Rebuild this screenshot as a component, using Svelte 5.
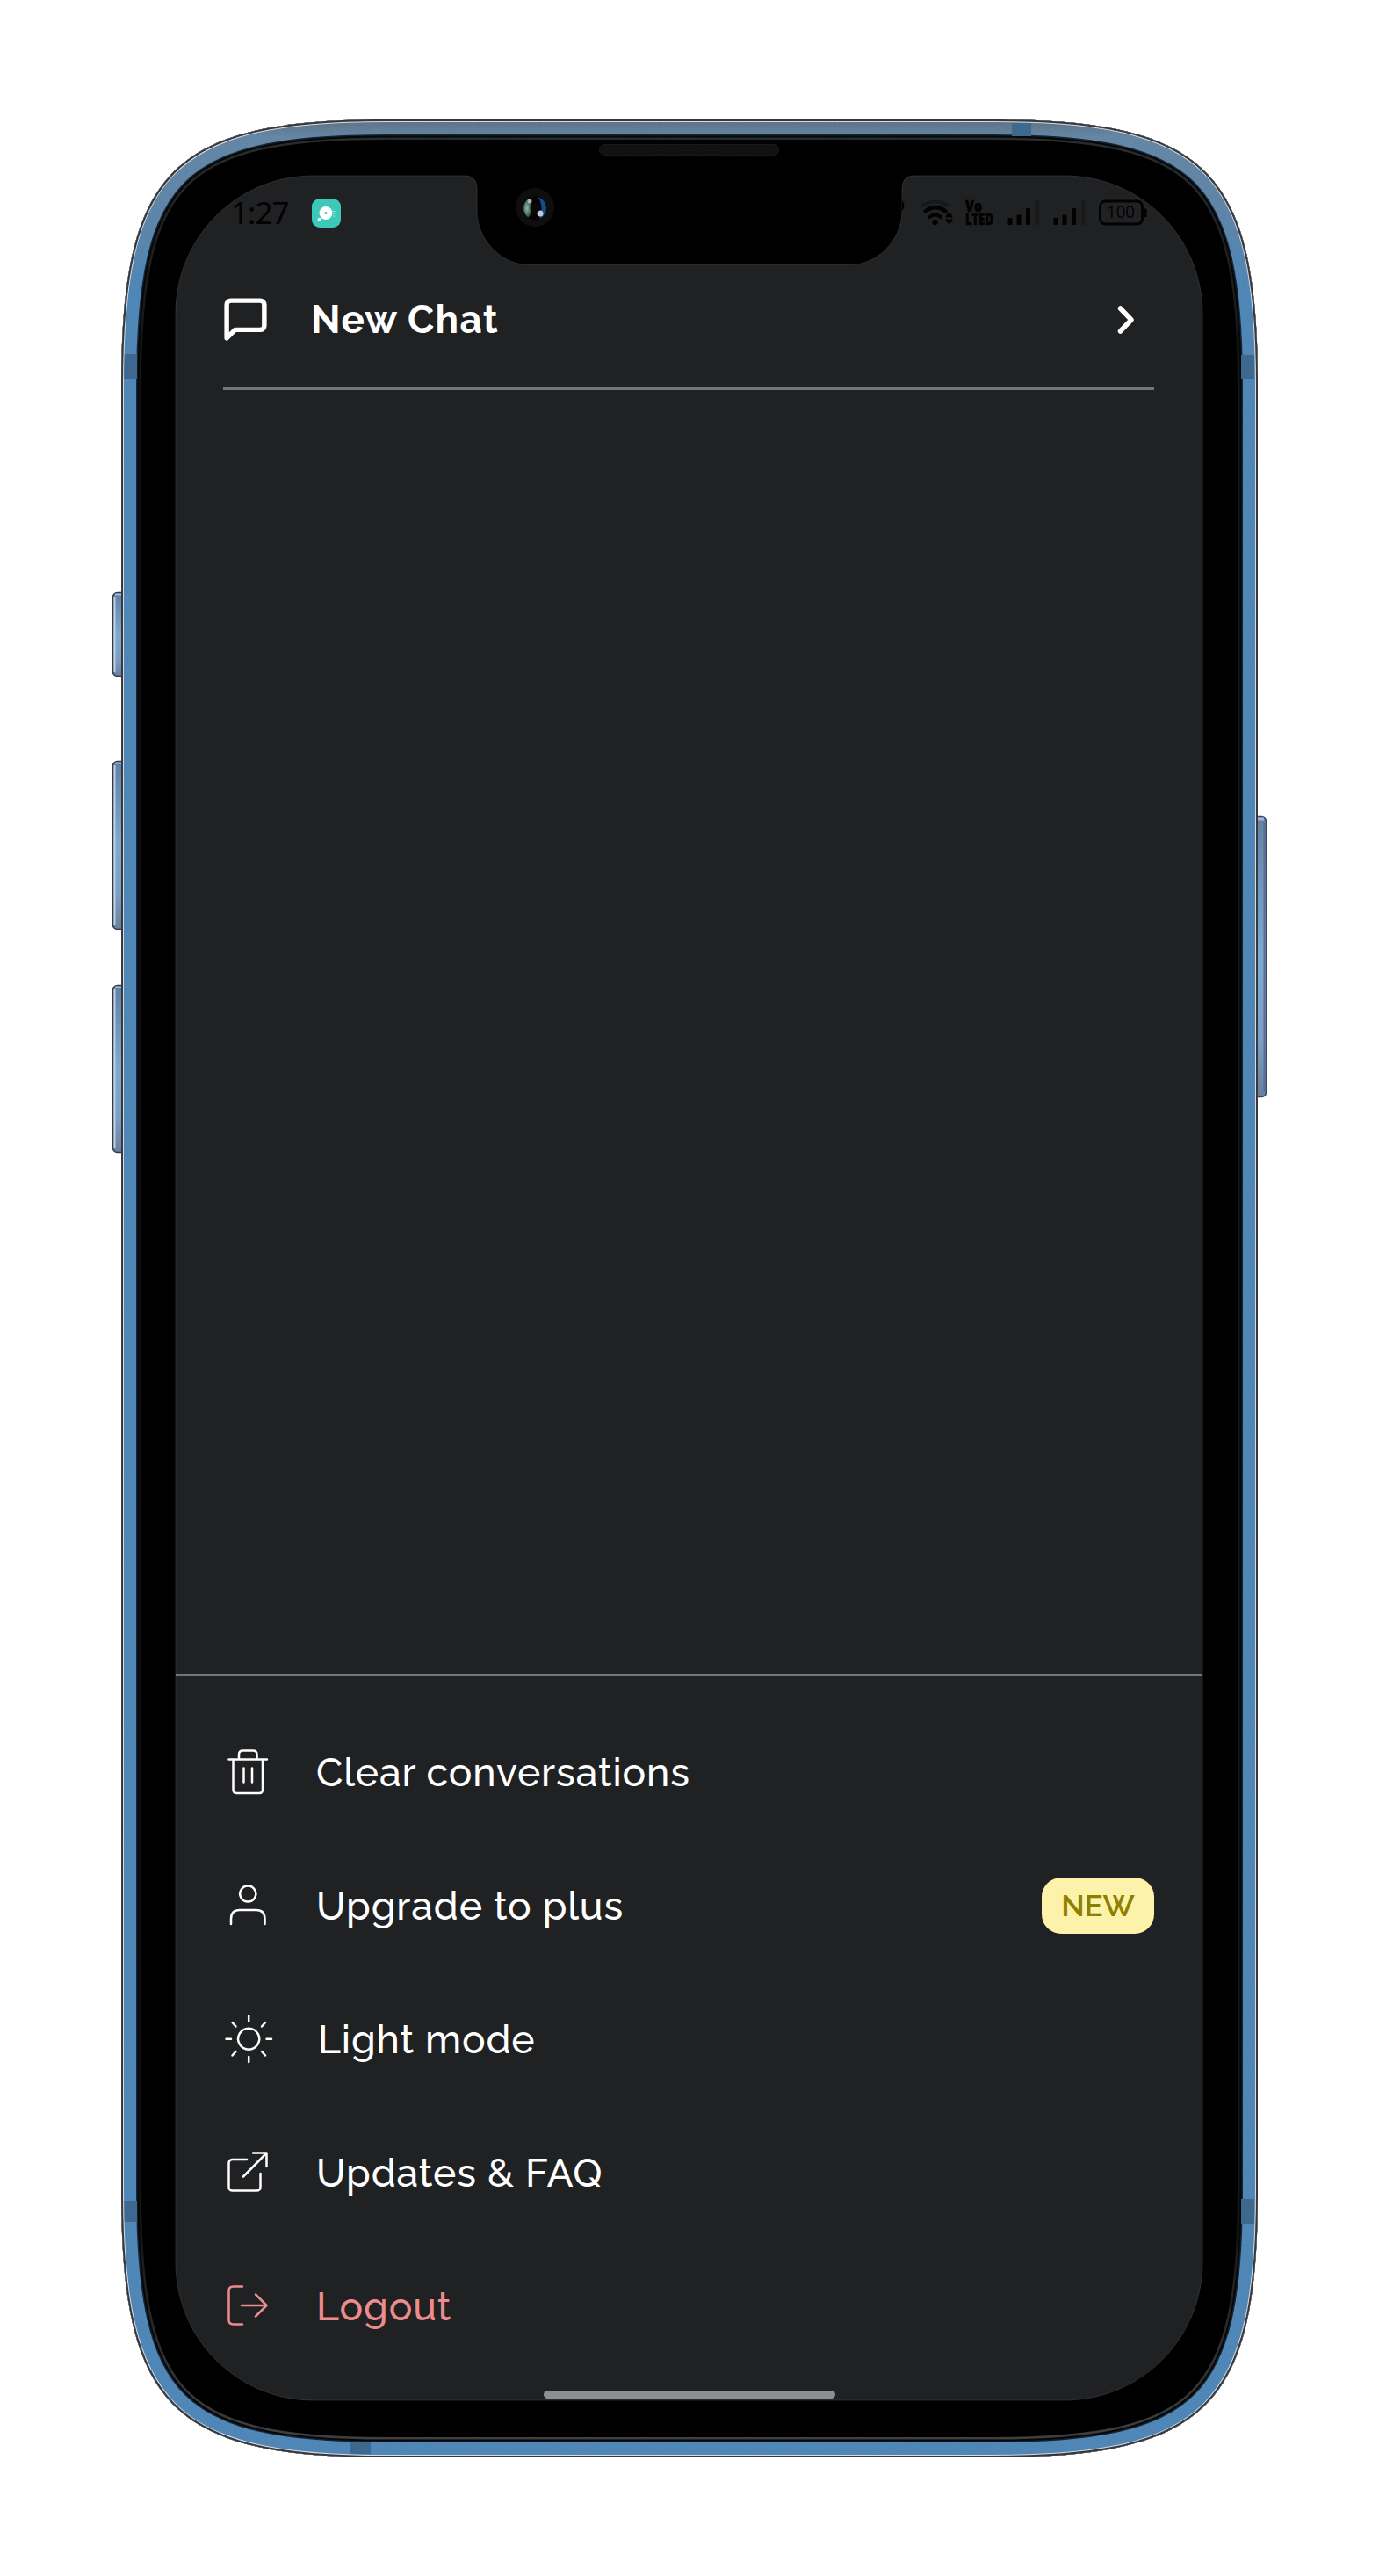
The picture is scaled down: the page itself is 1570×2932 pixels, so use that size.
<script>
  const body =
    'M440 136H1130C1374 136 1432 194 1432 440V2493C1432 2739 1374 2797 1130 2797H440C196 2797 138 2739 138 2493V440C138 194 196 136 440 136Z';

  const screen =
    'M357 200H529Q543 200 543 215V240C543 274 572 301.500 602 301.500H968C998 301.500 1027 274 1027 240V215Q1027 200 1041 200H1212C1299 200 1369 270 1369 357V2575C1369 2662 1299 2732 1212 2732H357C270 2732 200 2662 200 2575V357C200 270 270 200 357 200Z';

  const rings = [
    { color: 'url(#bezel)', width: 46 },
    { color: '#050708', width: 41 },
    { color: '#142331', width: 37 },
  ];

  const bands = [
    { x: 141, y: 403, w: 15, h: 28 },
    { x: 1413, y: 404, w: 15, h: 27 },
    { x: 1152, y: 140, w: 22, h: 15 },
    { x: 398, y: 2779, w: 24, h: 14 },
    { x: 141, y: 2505, w: 15, h: 24 },
    { x: 1413, y: 2503, w: 15, h: 28 },
  ];

  const leftKeys = [
    { y: 674, h: 96 },
    { y: 866, h: 192 },
    { y: 1121, h: 191 },
  ];

  const menu = [
    { id: 'clear', label: 'Clear conversations' },
    { id: 'plus', label: 'Upgrade to plus', badge: 'NEW' },
    { id: 'light', label: 'Light mode' },
    { id: 'faq', label: 'Updates & FAQ' },
    { id: 'logout', label: 'Logout' },
  ];

  const icons = {
    clear: 'M10.500 12.500H54M15.500 13V47Q15.500 51 19.500 51H45Q49 51 49 47V13M22 12V7Q22 2.500 26.500 2.500H38Q42.500 2.500 42.500 7V12M27.500 22.500V38.500M37 22.500V38.500',
    plus: 'M32.300 4.500A9 9 0 1 1 32.200 4.500M13 48V42Q13 32 23 32H41.500Q51.500 32 51.500 42V48',
    light: 'M33.200 14.700A12 12 0 1 1 33.100 14.700M33.200 0.500V6.500M33.200 47V53M7.500 26.700H13M53.500 26.700H59M14.500 8L18.500 12.500M52 8L48 12.500M14.500 45.500L18.500 41M52 45.500L48 41',
    faq: 'M31 12H15Q10.500 12 10.500 16.500V43Q10.500 47.500 15 47.500H42Q46.500 47.500 46.500 43V28M27 31.500L53 5M38 4.500H53.500V20',
    logout: 'M26 4.500H15.500Q10.500 4.500 10.500 9.500V42.500Q10.500 47.500 15.500 47.500H26M25 26H53M41 13.500L53.500 26L41 38.500',
  };
</script>

<div class="phone">
  <svg class="shell" viewBox="0 0 1570 2932" aria-hidden="true">
    <defs>
      <clipPath id="bodyClip"><path d={body} /></clipPath>
      <linearGradient id="metal" gradientUnits="userSpaceOnUse" x1="0" y1="136" x2="0" y2="330">
        <stop offset="0" stop-color="#5c6f80" />
        <stop offset=".1" stop-color="#6486a5" />
        <stop offset=".5" stop-color="#5f84a6" />
        <stop offset="1" stop-color="#4d86b7" />
      </linearGradient>
      <linearGradient id="bezel" gradientUnits="userSpaceOnUse" x1="0" y1="136" x2="0" y2="2797">
        <stop offset="0" stop-color="#2c2d2e" />
        <stop offset=".1" stop-color="#141516" />
        <stop offset=".9" stop-color="#141516" />
        <stop offset="1" stop-color="#434344" />
      </linearGradient>
      <linearGradient id="key" x1="0" y1="0" x2="0" y2="1">
        <stop offset="0" stop-color="#5f82a6" />
        <stop offset=".5" stop-color="#7fa9d0" />
        <stop offset=".8" stop-color="#7a9fc4" />
        <stop offset="1" stop-color="#67809f" />
      </linearGradient>
      <filter id="grain" filterUnits="userSpaceOnUse" x="130" y="130" width="1310" height="2675">
        <feTurbulence type="fractalNoise" baseFrequency=".4" numOctaves="2" seed="4" />
        <feColorMatrix values="0 0 0 0 .18  0 0 0 0 .28  0 0 0 0 .45  2.500 0 0 0 -1.100" />
        <feComposite in2="SourceGraphic" operator="in" />
      </filter>
      <pattern id="mesh" width="4" height="4" patternUnits="userSpaceOnUse">
        <rect width="4" height="4" fill="#0e0e0f" />
        <path d="M0 0h2v2H0zM2 2h2v2H2z" fill="#151516" />
      </pattern>
      <radialGradient id="lensGreen"><stop offset="0" stop-color="#8fc0a4" /><stop offset="1" stop-color="#2b4a3b" /></radialGradient>
      <clipPath id="lensClip"><circle cx="609" cy="237" r="13" /></clipPath>
    </defs>

    {#each leftKeys as k}
      <rect x="128.500" y={k.y + 0.5} width="20" height={k.h - 1} rx="5" fill="url(#key)" stroke="#33384a" stroke-width="1.500" />
      <path d={`M130.500 ${k.y + 5}V${k.y + k.h - 5}`} stroke="#c3cedb" stroke-width="2" />
      <path d={`M131 ${k.y + 2.5}H140`} stroke="#a9b5d6" stroke-width="2" />
    {/each}
    <rect x="1421" y="929.500" width="20.500" height="319" rx="5" fill="url(#key)" stroke="#3d4660" stroke-width="1.500" />
    <path d="M1439.500 936V1243" stroke="#57708e" stroke-width="2" />
    <path d="M1430 932H1439" stroke="#a9b5d6" stroke-width="3" />

    <g clip-path="url(#bodyClip)">
      <path d={body} fill="#000" />
      {#each rings as r}
        <path d={body} fill="none" stroke={r.color} stroke-width={r.width} />
      {/each}
      <path d={body} fill="none" stroke="url(#metal)" stroke-width="34" />
      <path d={body} fill="none" stroke="#000" stroke-width="34" filter="url(#grain)" opacity=".3" />
      {#each bands as b}
        <rect x={b.x} y={b.y} width={b.w} height={b.h} fill="#3f688f" />
      {/each}
      <path d={body} fill="none" stroke="#d9dce4" stroke-width="6" />
      <path d={body} fill="none" stroke="#39393c" stroke-width="4" />
    </g>

    <rect x="682.500" y="164.500" width="204" height="12" rx="6" fill="url(#mesh)" stroke="#1a1a1a" />
    <path d={screen} fill="#202123" stroke="#4a4b4d" stroke-width=".5" />
    <circle cx="609" cy="236" r="22" fill="#0e0e0f" />
    <circle cx="609" cy="237" r="13.500" fill="#050505" />
    <g clip-path="url(#lensClip)">
      <ellipse cx="600" cy="237" rx="5" ry="11" fill="url(#lensGreen)" />
      <path d="M612 224Q620 234 614 250L624 247V226Z" fill="#174a8c" />
      <circle cx="603" cy="229" r="2.500" fill="#a9b8b0" />
      <circle cx="615" cy="243" r="3.500" fill="#c5c6de" />
      <circle cx="609" cy="237" r="5.500" fill="#080808" />
    </g>
  </svg>

  <div class="screen">
    <div class="status">
      <span class="time">1:27</span>
      <svg class="app" viewBox="0 0 33 33" aria-hidden="true">
        <rect width="33" height="33" rx="9" fill="#3cc9b8" />
        <circle cx="16" cy="16.500" r="7.500" fill="#fff" />
        <circle cx="8.500" cy="24" r="2" fill="#fff" />
        <circle cx="16" cy="16.500" r="1.500" fill="#3cc9b8" />
        <path d="M24 14.500h2.500M24 17h2.500M24 20h2.500" stroke="#a5e6de" stroke-width="1.200" />
      </svg>
      <svg class="signals" viewBox="1020 220 290 44" aria-hidden="true">
        <g fill="none" stroke="#020202" stroke-width="4" stroke-linecap="round">
          <path d="M1050 234Q1065 225 1080 234" stroke="#17181a" stroke-width="3.500" />
          <path d="M1053.500 240.500Q1065 231.500 1076.500 240.500" stroke-width="4.500" />
          <path d="M1058.500 247Q1065 242 1071 247" />
          <path d="M1078 246.500L1080.500 243.500L1083 246.500M1078 250.500L1080.500 253.500L1083 250.500" stroke-width="2.800" />
        </g>
        <circle cx="1064.500" cy="253" r="3.200" fill="#020202" />
        <g fill="#020202">
          <rect x="1147.500" y="248" width="5" height="8" rx="1" /><rect x="1157.500" y="244.500" width="5" height="11.500" rx="1" /><rect x="1168" y="237" width="5" height="19" rx="1" />
          <rect x="1199.500" y="248" width="5" height="8" rx="1" /><rect x="1209.500" y="244.500" width="5" height="11.500" rx="1" /><rect x="1220" y="237" width="5" height="19" rx="1" />
        </g>
        <rect x="1178.500" y="228" width="4.500" height="28" rx="1" fill="#18191b" />
        <rect x="1231" y="228" width="4.500" height="28" rx="1" fill="#18191b" />
        <rect x="1252.500" y="229" width="48" height="26" rx="6" fill="none" stroke="#020202" stroke-width="2.800" />
        <path d="M1304 237.500V247" stroke="#020202" stroke-width="3" />
        <path d="M1027 228Q1032 234 1027 240Z" fill="#000" />
        <text class="volte"><tspan x="1099" y="240.500" textLength="19" lengthAdjust="spacingAndGlyphs">Vo</tspan><tspan x="1099" y="256" textLength="32" lengthAdjust="spacingAndGlyphs">LTED</tspan></text>
        <text class="full" x="1260" y="248" textLength="32" lengthAdjust="spacingAndGlyphs">100</text>
      </svg>
    </div>

    <header class="new-chat">
      <svg class="bubble" viewBox="0 0 24 24" aria-hidden="true">
        <path d="M21 15a2 2 0 0 1-2 2H7l-4 4V5a2 2 0 0 1 2-2h14a2 2 0 0 1 2 2z" />
      </svg>
      <span class="title">New Chat</span>
      <svg class="chevron" viewBox="0 0 20 34" aria-hidden="true"><path d="M3.500 4L16 17L3.500 30" /></svg>
    </header>

    <main></main>

    <nav>
      {#each menu as item}
        <div class={`row ${item.id}`}>
          <svg class="icon" viewBox="0 0 64 54" aria-hidden="true"><path d={icons[item.id]} /></svg>
          <span class="label">{item.label}</span>
          {#if item.badge}<span class="badge">{item.badge}</span>{/if}
        </div>
      {/each}
    </nav>
    <div class="home"></div>
  </div>
</div>

<style>
  :global(body) { margin: 0; background: #fff; }
  .phone {
    position: relative;
    box-sizing: border-box;
    width: 1570px;
    height: 2932px;
    padding: 200px 201px 200px 200px;
    font-family: Raleway, Lato, "Open Sans", sans-serif;
  }
  .shell { position: absolute; inset: 0; width: 1570px; height: 2932px; }
  .screen {
    position: relative;
    display: flex;
    flex-direction: column;
    height: 2532px;
    color: #fff;
  }
  .status {
    display: flex;
    align-items: center;
    height: 84px;
    padding: 0 59px 0 63px;
  }
  .time {
    width: 92px;
    color: #020202;
    font: 400 35px/40px "Noto Sans", sans-serif;
    letter-spacing: -1px;
    white-space: nowrap;
  }
  .app { width: 33px; height: 33px; }
  .signals { width: 290px; height: 44px; margin-left: auto; }
  .volte { font: 800 17px "Open Sans", sans-serif; fill: #020202; stroke: #020202; stroke-width: .6; }
  .full { font: 400 20px "Open Sans", sans-serif; fill: #020202; }
  .new-chat {
    display: flex;
    align-items: center;
    height: 155px;
    margin: 0 55px 0 54px;
    padding: 2px 22px 0 0;
    border-bottom: 3px solid #747577;
  }
  .bubble {
    width: 57px;
    height: 57px;
    margin: 0 46px 0 -3px;
    fill: none;
    stroke: #fff;
    stroke-width: 2.300;
    stroke-linecap: round;
    stroke-linejoin: round;
  }
  .title { flex: 1; font-size: 44px; font-weight: 700; letter-spacing: 1.25px; }
  .chevron {
    width: 20px;
    height: 34px;
    fill: none;
    stroke: #fff;
    stroke-width: 5.500;
    stroke-linecap: round;
    stroke-linejoin: round;
  }
  main { flex: 1; }
  nav {
    height: 780px;
    box-sizing: content-box;
    padding: 33px 55px 0 50px;
    border-top: 3px solid #747577;
  }
  .row { display: flex; align-items: center; height: 152px; }
  .icon {
    width: 64px;
    height: 54px;
    margin-right: 46px;
    overflow: visible;
    fill: none;
    stroke: currentColor;
    stroke-width: 2.500;
    stroke-linecap: round;
    stroke-linejoin: round;
  }
  .light .icon { margin-right: 48px; }
  .label { flex: 1; font-size: 44.500px; font-weight: 500; letter-spacing: .85px; white-space: nowrap; }
  .badge {
    display: flex;
    align-items: center;
    justify-content: center;
    width: 128px;
    height: 64px;
    border-radius: 22px;
    background: #fcf2aa;
    color: #8f7f00;
    font-size: 34.500px;
    font-weight: 600;
  }
  .logout { color: #ec8c8c; }
  .home {
    align-self: center;
    width: 332px;
    height: 9px;
    margin-bottom: 2px;
    border-radius: 5px;
    background: #8d8e8f;
  }
</style>
